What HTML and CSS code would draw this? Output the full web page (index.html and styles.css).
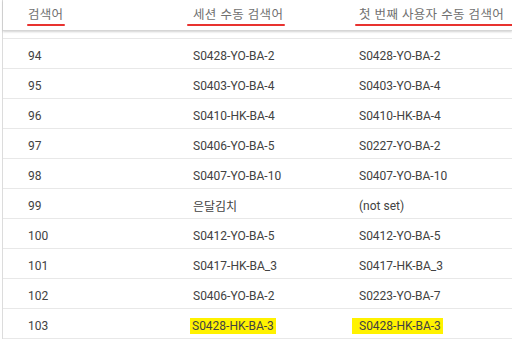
FILE: index.html
```html
<!DOCTYPE html>
<html lang="ko">
<head>
<meta charset="utf-8">
<link rel="stylesheet" href="styles.css">
</head>
<body>
<div class="table">
  <div class="head">
    <div class="hcell"><span class="mark m1">검색어</span></div>
    <div class="hcell"><span class="mark m2">세션 수동 검색어</span></div>
    <div class="hcell"><span class="mark m3">첫 번째 사용자 수동 검색어</span></div>
  </div>
  <div class="body">
    <div class="rows">
      <div class="row row-cut"></div>
      <div class="row"><div>94</div><div>S0428-YO-BA-2</div><div>S0428-YO-BA-2</div></div>
      <div class="row"><div>95</div><div>S0403-YO-BA-4</div><div>S0403-YO-BA-4</div></div>
      <div class="row"><div>96</div><div>S0410-HK-BA-4</div><div>S0410-HK-BA-4</div></div>
      <div class="row"><div>97</div><div>S0406-YO-BA-5</div><div>S0227-YO-BA-2</div></div>
      <div class="row"><div>98</div><div>S0407-YO-BA-10</div><div>S0407-YO-BA-10</div></div>
      <div class="row"><div>99</div><div class="kr">은달김치</div><div>(not set)</div></div>
      <div class="row"><div>100</div><div>S0412-YO-BA-5</div><div>S0412-YO-BA-5</div></div>
      <div class="row"><div>101</div><div>S0417-HK-BA_3</div><div>S0417-HK-BA_3</div></div>
      <div class="row"><div>102</div><div>S0406-YO-BA-2</div><div>S0223-YO-BA-7</div></div>
      <div class="row"><div>103</div><div><span class="hl hl2">S0428-HK-BA-3</span></div><div><span class="hl hl3">S0428-HK-BA-3</span></div></div>
    </div>
  </div>
</div>
</body>
</html>
```
FILE: styles.css
```css
html, body {
  margin: 0;
  padding: 0;
  background: #ffffff;
}
body {
  width: 512px;
  height: 339px;
  overflow: hidden;
  font-family: Roboto, "Noto Sans CJK KR", sans-serif;
  font-size: 12px;
  color: #424242;
}
.table {
  margin-left: 2px;
  border-left: 1px solid #dcdcdc;
  height: 339px;
  display: flex;
  flex-direction: column;
}
.head {
  position: relative;
  z-index: 1;
  height: 30px;
  display: grid;
  grid-template-columns: 165px 166px 1fr;
  padding-left: 25px;
  background: #fff;
  border-bottom: 1px solid #d6d6d6;
  box-shadow: 0 1px 2px rgba(0, 0, 0, 0.18);
}
.hcell {
  display: flex;
  align-items: flex-start;
  padding-top: 6px;
  font-family: "Noto Sans CJK KR", Roboto, sans-serif;
  font-size: 12.5px;
  color: #6f6f6f;
  letter-spacing: 0.3px;
  line-height: 16px;
}
.mark {
  display: block;
  position: relative;
  height: 16px;
}
.mark::after {
  content: "";
  position: absolute;
  top: 18px;
  height: 2px;
  background: #e8322f;
  border-radius: 1px;
}
.m1::after { left: -1px; right: -2px; }
.m2::after { left: -6px; right: -2px; }
.m3::after { left: -4px; right: -13px; }
.body {
  flex: 1;
  overflow: hidden;
}
.row {
  display: grid;
  grid-template-columns: 165px 166px 1fr;
  padding-left: 25px;
  align-items: center;
  border-bottom: 1px solid #e8e8e8;
  padding-top: 4px;
  height: 25px;
  box-sizing: content-box;
}
.row-cut {
  height: 7px;
  padding-top: 0;
}
.kr {
  font-family: "Noto Sans CJK KR", sans-serif;
  font-size: 12px;
}
.hl {
  background: #fff200;
  padding: 1px 2px;
}
.hl2 { margin-left: -3px; }
.hl3 { margin-left: -7px; padding-left: 7px; }
```
